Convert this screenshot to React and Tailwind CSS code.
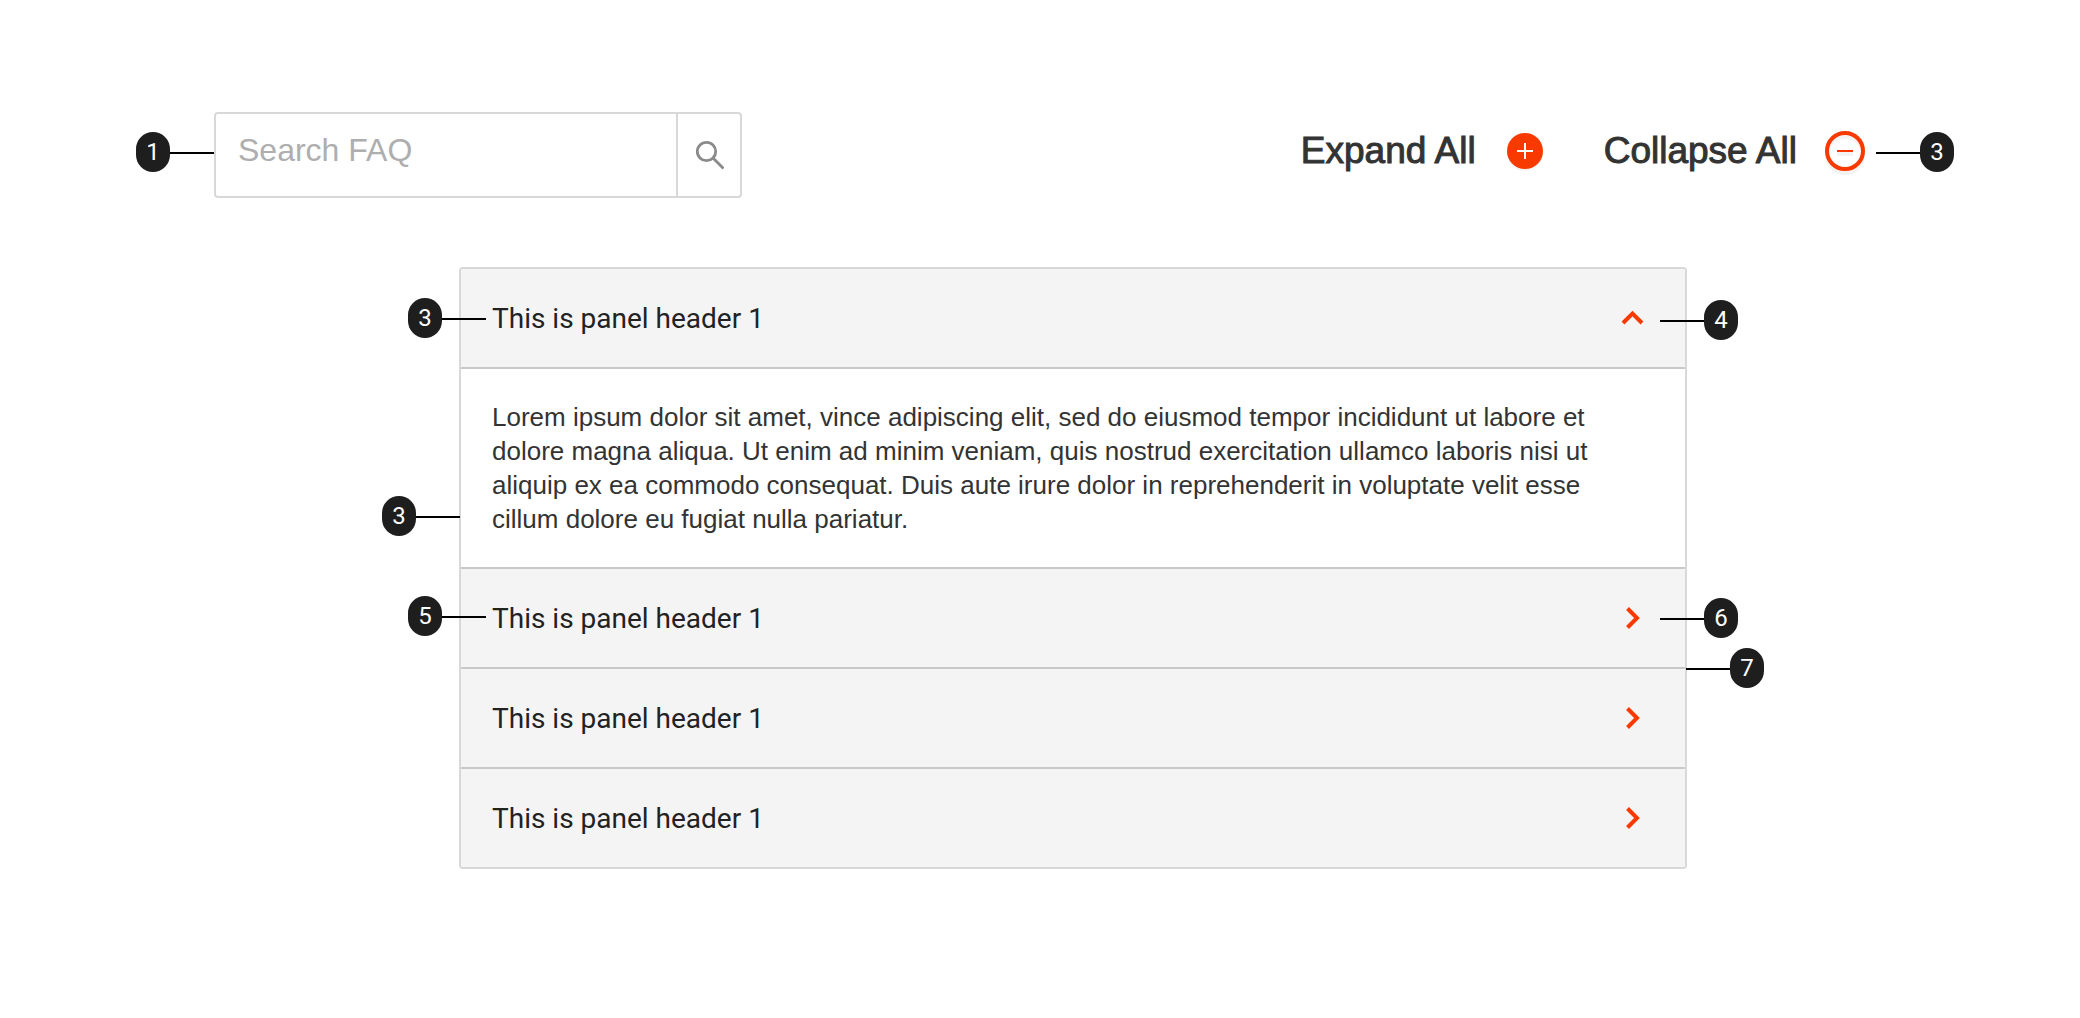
import { useState } from "react";

const LOREM =
  "Lorem ipsum dolor sit amet, vince adipiscing elit, sed do eiusmod tempor incididunt ut labore et dolore magna aliqua. Ut enim ad minim veniam, quis nostrud exercitation ullamco laboris nisi ut aliquip ex ea commodo consequat. Duis aute irure dolor in reprehenderit in voluptate velit esse cillum dolore eu fugiat nulla pariatur.";

// Numbered marker with a leader line; `flip` puts the line on the marker's left.
function Callout({ n, flip = false, className = "" }) {
  return (
    <div className={`flex items-start ${flip ? "flex-row-reverse" : ""} ${className}`}>
      <span className="flex h-10 w-[34px] items-center justify-center rounded-[17px] bg-[#1e1e1e] font-['Roboto',sans-serif] text-2xl text-white">
        {n}
      </span>
      <span className="mt-5 h-[2px] w-11 bg-black" />
    </div>
  );
}

function Chevron({ open }) {
  return (
    <svg width="24" height="24" viewBox="0 0 24 24" fill="none" stroke="#f83a00" strokeWidth="4" aria-hidden="true">
      {open ? <path d="M3 17 12.5 7.5 22 17" /> : <path d="M7.5 2.5 17 12 7.5 21.5" />}
    </svg>
  );
}

function Panel({ id, title, open, onToggle, callouts, children }) {
  return (
    <section className="relative border-b-2 border-[#c8c8c8] last:border-b-0">
      <h2>
        <button
          type="button"
          aria-expanded={open}
          aria-controls={id}
          onClick={onToggle}
          className="flex h-[98px] w-full items-center justify-between rounded-[2px] bg-[#f4f4f4] pr-[41px] pl-[31px] text-left font-['Roboto',sans-serif] text-[28px] text-[#222222]"
        >
          <span className="pt-[2px]">{title}</span>
          <Chevron open={open} />
        </button>
      </h2>
      {open && (
        <div id={id} className="border-t-2 border-[#c8c8c8] pt-[31px] pr-16 pb-[31px] pl-[31px]">
          <p className="text-[26px] leading-[34px] text-[#333333]">{children}</p>
        </div>
      )}
      {callouts}
    </section>
  );
}

export default function App() {
  const [open, setOpen] = useState([true, false, false, false]);
  const toggle = (i) => setOpen(open.map((v, k) => (k === i ? !v : v)));
  const callouts = [
    <>
      <Callout n="3" className="absolute top-[29px] left-[-53px]" />
      <Callout n="4" flip className="absolute top-[31px] right-[-53px]" />
      <Callout n="3" className="absolute top-[227px] left-[-79px]" />
    </>,
    <>
      <Callout n="5" className="absolute top-[27px] left-[-53px]" />
      <Callout n="6" flip className="absolute top-[29px] right-[-53px]" />
      <Callout n="7" flip className="absolute top-[79px] right-[-79px]" />
    </>,
    null,
    null,
  ];

  return (
    <main className="min-h-screen bg-white pt-28 pb-20 font-['Liberation_Sans',Arial,sans-serif]">
      <header className="flex items-start pr-[126px] pl-[136px]">
        <Callout n="1" className="mt-5" />
        <form role="search" onSubmit={(e) => e.preventDefault()} className="flex h-[86px] w-[528px] rounded border-2 border-[#d8d8d8]">
          <input
            type="search"
            aria-label="Search FAQ"
            placeholder="Search FAQ"
            className="min-w-0 flex-1 pb-[10px] pl-[22px] text-[32px] text-[#333333] outline-none placeholder:text-[#aeaeae]"
          />
          <button type="submit" aria-label="Search" className="flex w-16 items-center justify-center border-l-2 border-[#d8d8d8]">
            <svg width="30" height="30" viewBox="0 0 30 30" fill="none" stroke="#8a8a8a" strokeWidth="2.8" aria-hidden="true">
              <circle cx="12.5" cy="11.5" r="9.2" />
              <path d="M19 18 29.5 28.5" />
            </svg>
          </button>
        </form>
        <div className="mt-[19px] ml-auto flex gap-[60px] text-[37px] leading-10 text-[#333333]">
          <button
            type="button"
            onClick={() => setOpen(open.map(() => true))}
            className="flex items-center gap-[30px] [-webkit-text-stroke:1px_#333333]"
          >
            Expand All
            <svg width="38" height="40" viewBox="0 0 38 40" aria-hidden="true">
              <circle cx="19" cy="22" r="18" fill="#f3f3f3" />
              <circle cx="19" cy="20" r="18" fill="#f83a00" />
              <path d="M11 20h16M19 12v16" stroke="#ffffff" strokeWidth="2" />
            </svg>
          </button>
          <button
            type="button"
            onClick={() => setOpen(open.map(() => false))}
            className="flex items-center gap-7 [-webkit-text-stroke:1px_#333333]"
          >
            Collapse All
            <svg width="40" height="40" viewBox="0 0 40 40" className="overflow-visible" aria-hidden="true">
              <circle cx="20" cy="24" r="18" fill="none" stroke="#f3f3f3" strokeWidth="4" />
              <path d="M12 23h16" stroke="#f3f3f3" strokeWidth="4" />
              <circle cx="20" cy="20" r="18" fill="none" stroke="#f83a00" strokeWidth="4" />
              <path d="M12 20h16" stroke="#f83a00" strokeWidth="2" />
            </svg>
          </button>
        </div>
        <Callout n="3" flip className="mt-5 ml-[11px]" />
      </header>

      <div className="mt-[69px] mr-[393px] ml-[459px] rounded border-2 border-[#d8d8d8]">
        {open.map((isOpen, i) => (
          <Panel
            key={i}
            id={`panel-${i}`}
            title="This is panel header 1"
            open={isOpen}
            onToggle={() => toggle(i)}
            callouts={callouts[i]}
          >
            {LOREM}
          </Panel>
        ))}
      </div>
    </main>
  );
}
